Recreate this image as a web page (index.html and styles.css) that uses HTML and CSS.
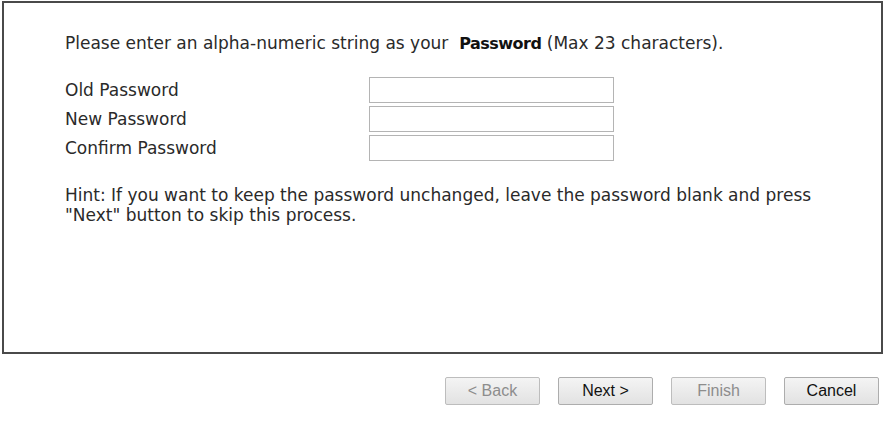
FILE: index.html
```html
<!DOCTYPE html>
<html>
<head>
<meta charset="utf-8">
<link rel="stylesheet" href="styles.css">
</head>
<body>
<div class="panel">
  <p class="intro">Please enter an alpha-numeric string as your &nbsp;<b>Password</b> (Max 23 characters).</p>
  <div class="fields">
    <label class="label">Old Password</label><input class="input" type="password">
    <label class="label">New Password</label><input class="input" type="password">
    <label class="label">Confirm Password</label><input class="input" type="password">
  </div>
  <p class="hint">Hint: If you want to keep the password unchanged, leave the password blank and press<br>"Next" button to skip this process.</p>
</div>
<div class="buttons">
  <button class="btn" disabled>&lt; Back</button>
  <button class="btn">Next &gt;</button>
  <button class="btn" disabled>Finish</button>
  <button class="btn">Cancel</button>
</div>
</body>
</html>
```
FILE: styles.css
```css
html, body { margin: 0; padding: 0; background: #fff; }
body { padding: 1px 0 0 2px; font-family: "DejaVu Sans", Verdana, sans-serif; font-size: 17px; color: #2a2a2a; }
.panel {
  box-sizing: border-box;
  width: 881px;
  height: 353px;
  border: 2px solid #4a4a4a;
  padding: 30px 0 0 61px;
}
.intro { margin: 0; height: 20px; line-height: 20px; white-space: nowrap; }
.intro b { color: #111; font-size: 16px; letter-spacing: -0.5px; line-height: 1; }
.fields {
  display: grid;
  grid-template-columns: 304px 245px;
  grid-auto-rows: 26px;
  row-gap: 3px;
  margin-top: 24px;
  align-items: center;
}
.label { line-height: 26px; }
.input {
  box-sizing: border-box;
  width: 245px;
  height: 26px;
  border: 1px solid #b4b4b4;
  margin: 0;
  padding: 0 4px;
  background: #fff;
}
.hint { margin: 24px 0 0; line-height: 20px; white-space: nowrap; }
.buttons {
  display: flex;
  justify-content: flex-end;
  gap: 18px;
  width: 877px;
  margin-top: 23px;
}
.btn {
  box-sizing: border-box;
  width: 95px;
  height: 28px;
  border: 1px solid #adadad;
  border-radius: 2px;
  background: linear-gradient(#f4f4f4, #e2e2e2);
  font-family: "Liberation Sans", Arial, sans-serif;
  font-size: 16px;
  color: #111;
  padding: 0;
}
.btn:disabled { color: #8d8d8d; border-color: #bdbdbd; }
```
